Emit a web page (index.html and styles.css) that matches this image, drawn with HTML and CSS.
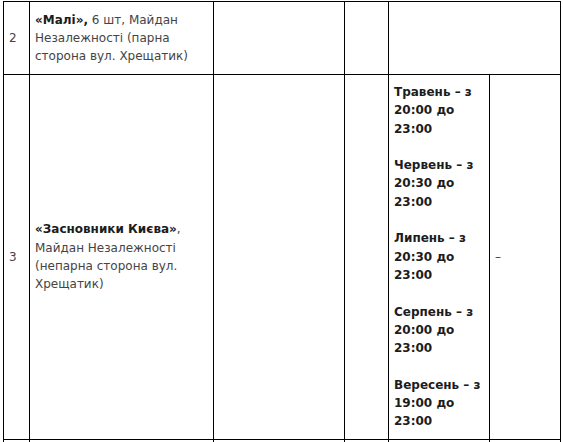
FILE: index.html
```html
<!DOCTYPE html>
<html lang="uk">
<head>
<meta charset="utf-8">
<link rel="stylesheet" href="styles.css">
</head>
<body>
<table class="grid">
  <colgroup>
    <col class="c-num">
    <col class="c-name">
    <col class="c-a">
    <col class="c-b">
    <col class="c-time">
    <col class="c-dash">
  </colgroup>
  <tbody>
    <tr class="row-short">
      <td class="num">2</td>
      <td class="name"><b>«Малі»,</b> 6 шт, Майдан Незалежності (парна сторона вул. Хрещатик)</td>
      <td></td>
      <td></td>
      <td colspan="2"></td>
    </tr>
    <tr>
      <td class="num">3</td>
      <td class="name"><b>«Засновники Києва»</b>, Майдан Незалежності (непарна сторона вул. Хрещатик)</td>
      <td></td>
      <td></td>
      <td class="time">
        <p>Травень – з 20:00 до 23:00</p>
        <p>Червень – з 20:30 до 23:00</p>
        <p>Липень – з 20:30 до 23:00</p>
        <p>Серпень – з 20:00 до 23:00</p>
        <p>Вересень – з 19:00 до 23:00</p>
      </td>
      <td class="dash">–</td>
    </tr>
    <tr class="row-next">
      <td></td>
      <td></td>
      <td></td>
      <td></td>
      <td></td>
      <td></td>
    </tr>
  </tbody>
</table>
</body>
</html>
```
FILE: styles.css
```css
html, body {
  margin: 0;
  padding: 0;
  overflow: hidden;
  background: #fff;
}
body {
  padding: 1px 0 0 3px;
  font-family: "DejaVu Sans", sans-serif;
  font-size: 12px;
  line-height: 18.3px;
  color: #444;
}
.grid {
  border-collapse: collapse;
  table-layout: fixed;
  width: 557px;
}
.c-num { width: 26px; }
.c-name { width: 184px; }
.c-a { width: 131px; }
.c-b { width: 44px; }
.c-time { width: 101px; }
.c-dash { width: 71px; }
.grid td {
  border: 1px solid #000;
  padding: 8px 6px 8px 5px;
  vertical-align: middle;
}
.row-short td { height: 56px; }
.grid b { color: #1c1c1c; font-weight: bold; }
.num { text-align: left; }
.time {
  font-weight: bold;
  color: #1c1c1c;
  padding-right: 4px;
}
.time p { margin: 0 0 18.3px; }
.time p:last-child { margin-bottom: 0; }
.row-next td { height: 40px; }
```
